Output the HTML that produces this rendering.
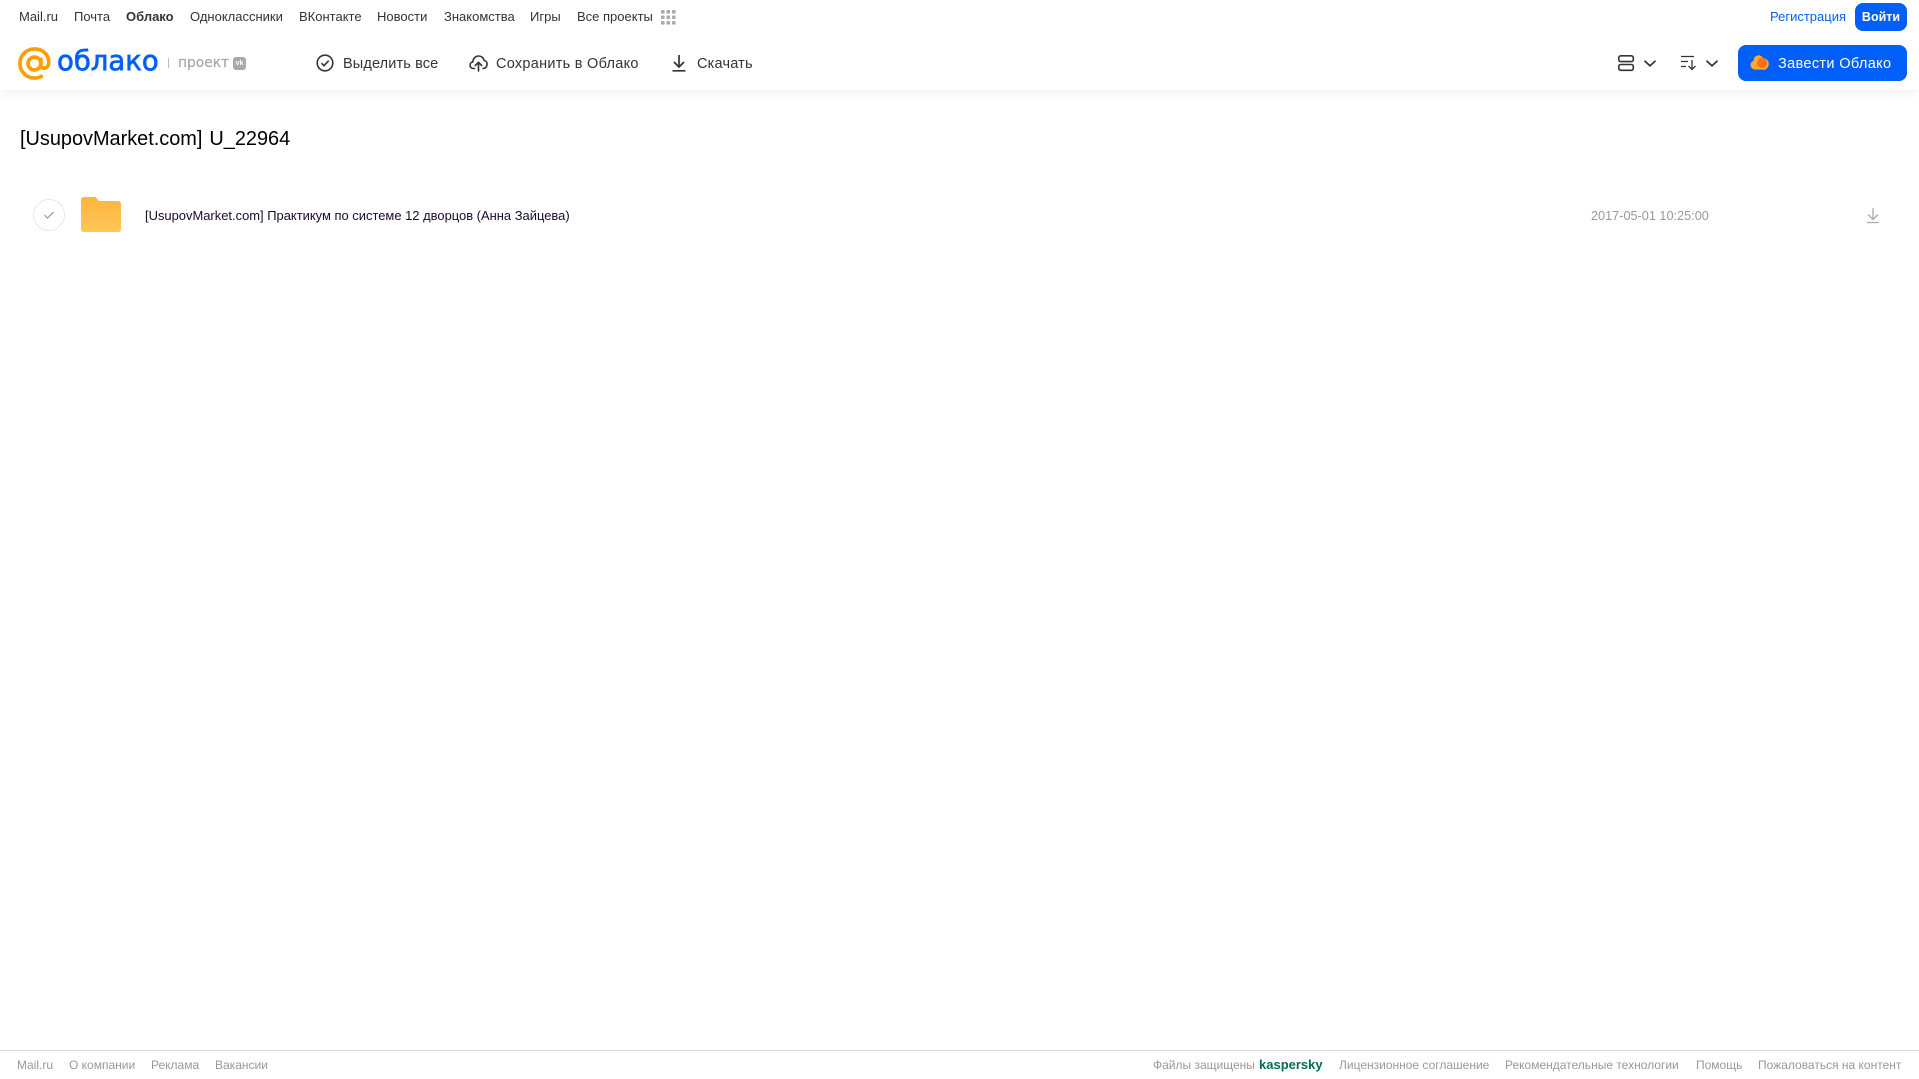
<!DOCTYPE html>
<html lang="ru"><head><meta charset="utf-8"><title>Облако</title>
<style>
html,body{margin:0;padding:0;background:#fff;width:1919px;height:1079px;overflow:hidden}
body{position:relative;font-family:"Liberation Sans","Noto Sans CJK SC",sans-serif}
.t{position:absolute;white-space:nowrap;line-height:16px;font-size:12px;color:#333}
.n{font-size:13px;top:9px}
.a{position:absolute;display:block}
.tb{font-size:14.5px;color:#333;letter-spacing:.13px;line-height:20px}
.f{color:#999;top:1057px}
</style></head><body>
<div class="a" style="left:0;top:0;width:1919px;height:90px;background:#fff;box-shadow:0 2px 10px rgba(0,0,0,.07)"></div>
<span class="t n" style="left:19px">Mail.ru</span>
<span class="t n" style="left:74px">Почта</span>
<span class="t n" style="left:126px;font-weight:700">Облако</span>
<span class="t n" style="left:190px">Одноклассники</span>
<span class="t n" style="left:299px">ВКонтакте</span>
<span class="t n" style="left:377px">Новости</span>
<span class="t n" style="left:444px">Знакомства</span>
<span class="t n" style="left:530px">Игры</span>
<span class="t n" style="left:577px">Все проекты</span>
<svg class="a" style="left:661px;top:10px" width="15" height="15" fill="#aaa"><rect x="0" y="0" width="3.6" height="3.6" rx="1"/><rect x="5.5" y="0" width="3.6" height="3.6" rx="1"/><rect x="11" y="0" width="3.6" height="3.6" rx="1"/><rect x="0" y="5.5" width="3.6" height="3.6" rx="1"/><rect x="5.5" y="5.5" width="3.6" height="3.6" rx="1"/><rect x="11" y="5.5" width="3.6" height="3.6" rx="1"/><rect x="0" y="11" width="3.6" height="3.6" rx="1"/><rect x="5.5" y="11" width="3.6" height="3.6" rx="1"/><rect x="11" y="11" width="3.6" height="3.6" rx="1"/></svg>
<span class="t n" style="left:1770px;color:#005ff9">Регистрация</span>
<div class="a" style="left:1855px;top:3px;width:52px;height:28px;border-radius:8px;background:#005ff9;color:#fff;font-size:12.5px;font-weight:700;line-height:28px;text-align:center">Войти</div>

<svg class="a" style="left:18px;top:47px" width="33" height="33" viewBox="0 0 34 34" fill="none" stroke="#ff9e00" stroke-width="3.8"><circle cx="17" cy="17" r="6.6"/><path d="M23.6 11v7.5c0 4.6 7.4 4.6 8-1.5C32.300 8 25.500 2 17 2 8.700 2 2 8.700 2 17s6.700 15 15 15c3.200 0 6-.9 8.400-2.500"/></svg>
<span class="t" style="left:57px;top:40px;font-family:'DejaVu Sans',sans-serif;font-size:27.5px;line-height:42px;color:#005ff9;-webkit-text-stroke:.7px #005ff9">облако</span>
<div class="a" style="left:168px;top:58px;width:1px;height:10px;background:#bbb"></div>
<span class="t" style="left:178px;top:54px;font-family:'DejaVu Sans',sans-serif;font-size:13.8px;line-height:18px;color:#aaa;-webkit-text-stroke:.25px #aaa">проект</span>
<div class="a" style="left:233px;top:57px;width:13px;height:13px;border-radius:3px;background:#aaa;color:#fff;font-size:7px;font-weight:700;line-height:13px;text-align:center">vk</div>

<svg class="a" style="left:316px;top:54px" width="18" height="18" fill="none" stroke="#333" stroke-width="1.6"><circle cx="9" cy="9" r="7.800"/><path d="M5.500 9.200l2.500 2.500 4.700-5"/></svg>
<span class="t tb" style="left:343px;top:54px">Выделить все</span>
<svg class="a" style="left:469px;top:54px" width="19" height="18" fill="none" stroke="#333" stroke-width="1.6" stroke-linecap="round" stroke-linejoin="round"><path d="M5.500 14.500H4.500C2.500 14.500 1 13 1 11.200 1 9.500 2.200 8.200 3.800 8 4 4.500 6.500 2 9.600 2c2.800 0 5 1.900 5.500 4.500 1.800.2 3 1.800 3 3.500 0 2.400-1.500 4.500-4 4.500"/><path d="M9.500 17V8.500M6.300 11.500l3.200-3.200 3.200 3.200"/></svg>
<span class="t tb" style="left:496px;top:54px;letter-spacing:.27px">Сохранить в Облако</span>
<svg class="a" style="left:671px;top:54px" width="16" height="18" fill="none" stroke="#333" stroke-width="1.7"><path d="M8 1v11.500M3 8l5 5 5-5M1.500 16.800h13"/></svg>
<span class="t tb" style="left:697px;top:54px;letter-spacing:.2px">Скачать</span>

<svg class="a" style="left:1617px;top:54px" width="18" height="18" fill="none" stroke="#333" stroke-width="1.6"><rect x="1.800" y="1.800" width="14.500" height="5.800" rx="2"/><rect x="1.800" y="10.500" width="14.500" height="5.800" rx="2"/></svg>
<svg class="a" style="left:1643px;top:59px" width="14" height="9" fill="none" stroke="#333" stroke-width="1.7"><path d="M1.500 1.800L7 6.800l5.500-5"/></svg>
<svg class="a" style="left:1680px;top:55px" width="18" height="16" fill="none" stroke="#333" stroke-width="1.3"><path d="M1 1.500h13M1 6.500h7M1 11.500h5M12 5v9.500M8.500 11l3.500 3.500 3.500-3.500"/></svg>
<svg class="a" style="left:1705px;top:59px" width="14" height="9" fill="none" stroke="#333" stroke-width="1.7"><path d="M1.500 1.800L7 6.800l5.500-5"/></svg>

<div class="a" style="left:1738px;top:45px;width:169px;height:36px;border-radius:8px;background:#005ff9"></div>
<svg class="a" style="left:1750px;top:54px" width="20" height="17"><circle cx="5" cy="11" r="4.500" fill="#ffa930"/><circle cx="8.500" cy="6" r="4.800" fill="#ffa930"/><circle cx="13" cy="10" r="5.800" fill="#ffa930"/><rect x="4" y="9" width="12" height="6.500" fill="#ffa930"/><circle cx="12" cy="9" r="5" fill="#f9701e"/></svg>
<span class="t" style="left:1778px;top:54px;color:#fff;font-size:14.500px;line-height:20px;letter-spacing:.35px">Завести Облако</span>

<span class="t" style="left:20px;top:126px;font-size:19.9px;line-height:26px;color:#000;word-spacing:1.5px">[UsupovMarket.com] U_22964</span>

<div class="a" style="left:33px;top:199px;width:30px;height:30px;border:1px solid #e8e8e8;border-radius:50%"></div>
<svg class="a" style="left:43px;top:210px" width="12" height="10" fill="none" stroke="#999" stroke-width="1.200"><path d="M1.500 5l3 3 6-6"/></svg>
<svg class="a" style="left:81px;top:196px" width="40" height="36" viewBox="0 0 41 36" preserveAspectRatio="none"><defs><linearGradient id="g" x1="0" y1="0" x2="0" y2="1"><stop offset="0" stop-color="#fdb63d"/><stop offset="1" stop-color="#ffc657"/></linearGradient></defs><path d="M3 1h10c2.500 0 3 1 4 2.500 .6 1 1.300 1.500 2.500 1.500H38c1.600 0 3 1.300 3 3v25c0 1.700-1.400 3-3 3H3c-1.700 0-3-1.300-3-3V4c0-1.700 1.300-3 3-3z" fill="url(#g)"/></svg>
<span class="t" style="left:145px;top:208px;font-size:12.95px;color:#1c0a2a">[UsupovMarket.com] Практикум по системе 12 дворцов (Анна Зайцева)</span>
<span class="t" style="left:1591px;top:208px;font-size:12.7px;color:#999">2017-05-01 10:25:00</span>
<svg class="a" style="left:1866px;top:207px" width="14" height="17" fill="none" stroke="#aaa" stroke-width="1.300"><path d="M7 1v11M2 7.500l5 5 5-5M1 15.500h12"/></svg>

<div class="a" style="left:0;top:1050px;width:1919px;height:1px;background:#ddd"></div>
<span class="t f" style="left:17px">Mail.ru</span>
<span class="t f" style="left:69px">О компании</span>
<span class="t f" style="left:151px">Реклама</span>
<span class="t f" style="left:215px">Вакансии</span>
<span class="t f" style="left:1153px">Файлы защищены</span>
<span class="t f" style="left:1259px;color:#006d5c;font-weight:700;font-size:13px">kaspersky</span>
<span class="t f" style="left:1339px">Лицензионное соглашение</span>
<span class="t f" style="left:1505px">Рекомендательные технологии</span>
<span class="t f" style="left:1696px">Помощь</span>
<span class="t f" style="left:1758px">Пожаловаться на контент</span>
</body></html>
